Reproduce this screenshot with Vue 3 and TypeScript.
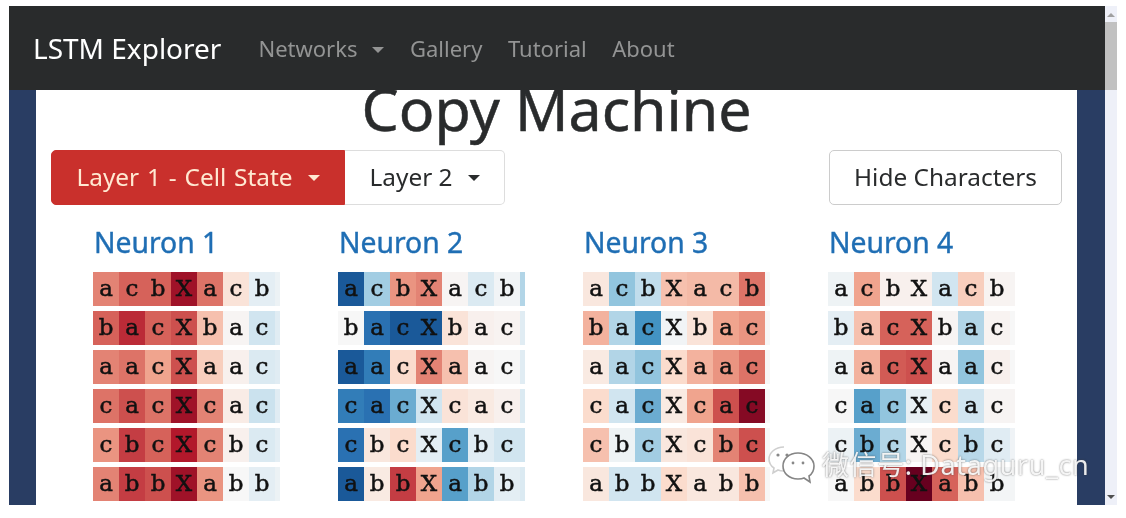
<script setup lang="ts">
type Neuron = { name: string; rows: number[][] }

const words = ['acbXacb', 'bacXbac', 'aacXaac', 'cacXcac', 'cbcXcbc', 'abbXabb']

const neurons: Neuron[] = [
  { name: 'Neuron 1', rows: [
    [.5, .6, .6, .85, .55, .15, -.1, -.06],
    [.6, .75, .6, .65, .3, .02, -.2, -.12],
    [.5, .55, .4, .65, .25, .05, -.15, -.12],
    [.55, .65, .55, .85, .5, .08, -.22, -.12],
    [.45, .7, .6, .8, .5, .05, -.15, -.1],
    [.5, .7, .65, .85, .45, 0, -.1, -.06],
  ] },
  { name: 'Neuron 2', rows: [
    [-.85, -.35, .45, .5, .02, -.15, -.03, -.3],
    [0, -.75, -.85, -.85, .15, .05, .03, -.12],
    [-.85, -.7, .2, .5, .3, .02, 0, -.12],
    [-.7, -.75, -.5, -.2, .15, .1, .05, -.15],
    [-.75, .12, .2, -.1, -.55, -.12, -.2, -.2],
    [-.85, .1, .7, .4, -.55, -.3, -.1, -.15],
  ] },
  { name: 'Neuron 3', rows: [
    [.12, -.4, -.25, .3, .32, .32, .55, 0],
    [.35, -.3, -.6, -.03, .15, .4, .45, 0],
    [.1, -.3, -.4, .2, .35, .45, .55, 0],
    [.2, -.2, -.5, .1, .4, .65, .92, 0],
    [.3, -.05, -.35, .12, .15, .5, .65, 0],
    [.12, -.2, -.2, .2, .12, .12, .3, 0],
  ] },
  { name: 'Neuron 4', rows: [
    [-.05, .4, .05, .05, -.2, .25, .03, .02],
    [-.1, .3, .6, .6, .02, -.3, .03, 0],
    [-.05, .35, .62, .65, .02, -.4, .05, 0],
    [0, -.55, -.4, -.08, .2, -.2, .02, .02],
    [-.06, -.5, -.3, .02, .2, -.28, -.12, -.04],
    [0, .2, .65, 1, .6, .3, -.02, -.02],
  ] },
]

const reds = ['#f7f7f7', '#fbdccd', '#f0a48e', '#d6625a', '#b2182b', '#67001f']
const blues = ['#f7f7f7', '#d1e5f0', '#92c5de', '#4393c3', '#2166ac', '#053061']

function cellColor(v: number): string {
  const scale = v >= 0 ? reds : blues
  const p = Math.min(Math.abs(v), 1) * (scale.length - 1)
  const i = Math.min(Math.floor(p), scale.length - 2)
  const t = p - i
  const a = scale[i]
  const b = scale[i + 1]
  const parts = [1, 3, 5].map((k) => {
    const x = parseInt(a.slice(k, k + 2), 16)
    const y = parseInt(b.slice(k, k + 2), 16)
    return Math.round(x + (y - x) * t)
  })
  return `rgb(${parts.join(',')})`
}
</script>

<template>
  <div class="page">
    <div class="window">
      <nav class="navbar">
        <span class="brand">LSTM Explorer</span>
        <span class="link">Networks<i class="caret caret-nav"></i></span>
        <span class="link">Gallery</span>
        <span class="link">Tutorial</span>
        <span class="link">About</span>
      </nav>
      <main class="content">
        <h1 class="title">Copy Machine</h1>
        <div class="toolbar">
          <div class="group">
            <button class="btn btn-red">Layer 1 - Cell State<i class="caret caret-btn"></i></button>
            <button class="btn btn-white">Layer 2<i class="caret caret-btn"></i></button>
          </div>
          <button class="btn btn-hide">Hide Characters</button>
        </div>
        <div class="neurons">
          <section v-for="n in neurons" :key="n.name" class="neuron">
            <h3 class="neuron-name">{{ n.name }}</h3>
            <div v-for="(row, r) in n.rows" :key="r" class="seq">
              <span
                v-for="(v, c) in row"
                :key="c"
                class="cell"
                :class="{ tail: c === 7 }"
                :style="{ backgroundColor: cellColor(v) }"
              >{{ words[r][c] }}</span>
            </div>
          </section>
        </div>
      </main>
    </div>
    <aside class="scrollbar">
      <i class="arrow arrow-up"></i>
      <div class="thumb"></div>
      <div class="track"></div>
      <i class="arrow arrow-down"></i>
    </aside>
    <div class="watermark">
      <svg class="wechat" width="48" height="40" viewBox="0 0 48 40" fill="none" stroke-width="1.6">
        <path d="M17 2C8 2 2 8 2 14c0 4 2 7 5 9l-1 5 5-3c2 1 4 1 6 1" fill="rgba(255,255,255,.9)" stroke="#cfcfcf" />
        <path d="M31 8c-9 0-15 6-15 13s6 13 15 13c2 0 4 0 6-1l6 4-1-6c3-2 5-6 5-10 0-7-7-13-16-13z" fill="rgba(255,255,255,.6)" stroke="#858585" />
        <circle cx="11" cy="10" r="1.6" fill="#888" />
        <circle cx="20" cy="10" r="1.6" fill="#888" />
        <circle cx="26" cy="18" r="1.4" fill="#888" />
        <circle cx="36" cy="18" r="1.4" fill="#888" />
      </svg>
      <span class="mark-text">微信号: Dataguru_cn</span>
    </div>
  </div>
</template>

<style>
html, body { background: #fff; overflow: hidden; }
</style>

<style scoped>
.page {
  position: relative;
  width: 1126px;
  height: 518px;
  box-sizing: border-box;
  padding: 6px 9px 13px 9px;
  display: flex;
  overflow: hidden;
  background: #fff;
  font-family: "Noto Sans", "Open Sans", sans-serif;
  filter: blur(0.4px);
}
.window {
  flex: 1;
  min-width: 0;
  display: flex;
  flex-direction: column;
  overflow: hidden;
  background: #293d63;
}
.navbar {
  position: relative;
  z-index: 2;
  height: 84px;
  flex: none;
  display: flex;
  align-items: center;
  padding-left: 24px;
  background: #292b2c;
}
.brand {
  font-size: 28px;
  color: #fff;
  margin-right: 37px;
}
.link {
  font-size: 22px;
  color: #939494;
  margin-right: 25.5px;
  display: flex;
  align-items: center;
}
.caret {
  display: inline-block;
  width: 0;
  height: 0;
  border-left: 6px solid transparent;
  border-right: 6px solid transparent;
  border-top: 6px solid currentColor;
}
.caret-nav { margin-left: 15px; margin-top: 3px; }
.caret-btn { margin-left: 15px; margin-top: 3px; }
.content {
  flex: 1;
  min-height: 0;
  margin: 0 28px 0 27px;
  padding: 0 15px;
  background: #fff;
  overflow: hidden;
}
.title {
  margin: 0;
  height: 60px;
  line-height: 36px;
  text-align: center;
  font-size: 59px;
  font-weight: 400;
  color: #292b2c;
  -webkit-text-stroke: 0.5px #292b2c;
}
.toolbar {
  display: flex;
  justify-content: space-between;
}
.group { display: flex; }
.btn {
  height: 55px;
  box-sizing: border-box;
  font-family: inherit;
  font-size: 24.4px;
  display: flex;
  align-items: center;
  border: 1px solid #ddd;
  background: #fff;
  color: #292b2c;
  padding: 0 10px 3px;
}
.btn-red {
  width: 294px;
  justify-content: center;
  background: #c9302c;
  border-color: #c9302c;
  color: #ffe9d2;
  border-radius: 5px 0 0 5px;
  word-spacing: 1.5px;
}
.btn-white {
  width: 160px;
  justify-content: center;
  border-left: none;
  border-radius: 0 5px 5px 0;
}
.btn-hide {
  width: 233px;
  justify-content: center;
  border-color: #ccc;
  border-radius: 5px;
}
.neurons {
  display: grid;
  grid-template-columns: repeat(4, 245px);
  padding-left: 42px;
  margin-top: 21px;
}
.neuron-name {
  margin: 0 0 9px 1px;
  height: 37px;
  line-height: 32px;
  font-size: 28.3px;
  font-weight: 400;
  color: #1f6eb4;
  -webkit-text-stroke: 0.4px #1f6eb4;
}
.seq {
  display: flex;
  height: 34px;
  margin-bottom: 5px;
}
.cell {
  width: 26px;
  height: 34px;
  box-sizing: border-box;
  padding-bottom: 2px;
  flex: none;
  display: flex;
  align-items: center;
  justify-content: center;
  font-family: "DejaVu Serif", "Liberation Serif", serif;
  font-size: 23px;
  color: #111;
  -webkit-text-stroke: 0.5px #111;
  overflow: hidden;
}
.tail {
  width: 5px;
  color: transparent;
  -webkit-text-stroke: 0;
}
.scrollbar {
  width: 12px;
  flex: none;
  display: flex;
  flex-direction: column;
  align-items: center;
  background: #eef0f8;
}
.arrow {
  width: 0;
  height: 0;
  flex: none;
  border-left: 4px solid transparent;
  border-right: 4px solid transparent;
}
.arrow-up { border-bottom: 4px solid #a0a0a0; margin: 7px 0 5px; }
.arrow-down { border-top: 4px solid #505050; margin: 5px 0 6px; }
.thumb {
  width: 12px;
  height: 68px;
  flex: none;
  background: #c1c1c1;
}
.track { flex: 1; }
.watermark {
  position: absolute;
  left: 767px;
  top: 445px;
  display: flex;
  align-items: center;
  gap: 7px;
}
.mark-text {
  font-family: "Noto Sans", "Noto Sans CJK SC", sans-serif;
  font-size: 27px;
  letter-spacing: 0.6px;
  margin-top: -4px;
  color: rgba(255, 255, 255, .9);
  text-shadow: 0 0 2px rgba(60, 60, 60, .75);
}
</style>
